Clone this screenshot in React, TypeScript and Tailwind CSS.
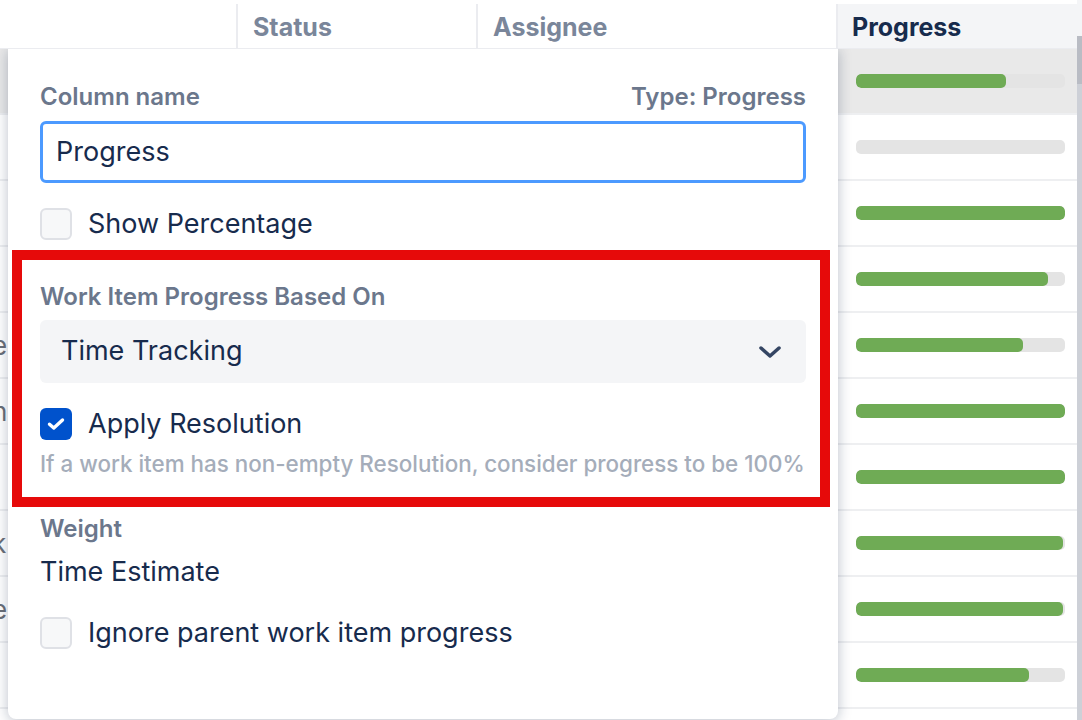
import React from 'react';

// fill widths (px) of the 209px progress track, one per row
const rows = [
  { fill: 150, tail: '', highlight: true },
  { fill: 0, tail: '' },
  { fill: 209, tail: '' },
  { fill: 192, tail: '' },
  { fill: 167, tail: 'e' },
  { fill: 209, tail: 'n' },
  { fill: 209, tail: '' },
  { fill: 207, tail: 'k' },
  { fill: 207, tail: 'es' },
  { fill: 173, tail: '' },
];

const Checkbox: React.FC<{ checked?: boolean }> = ({ checked }) =>
  checked ? (
    <span className="w-8 h-8 rounded-md bg-[#0052cc] flex items-center justify-center shrink-0">
      <svg width="18" height="14" viewBox="0 0 18 14" fill="none">
        <path d="M2.5 7.2 L6.8 11 L15.5 3" stroke="white" strokeWidth="3.4" strokeLinecap="round" strokeLinejoin="round" />
      </svg>
    </span>
  ) : (
    <span className="w-8 h-8 rounded-md border-2 border-[#dfe1e6] bg-[#f7f8f9] shrink-0" />
  );

const Label: React.FC<{ children: React.ReactNode }> = ({ children }) => (
  <div className="text-[24px] leading-7 font-semibold text-[#6b778c]">{children}</div>
);

const App: React.FC = () => {
  return (
    <div className="relative w-[1082px] h-[720px] overflow-hidden bg-white font-['Inter','Liberation_Sans',sans-serif]">
      {/* table underneath */}
      <div className="flex h-full">
        <div className="flex-1 flex flex-col">
          {/* header sits above the popup so its shadow stays below */}
          <div className="relative z-10 h-[49px] pt-1 flex bg-white border-b border-[#ebecf0] text-[25px] font-bold">
            <div className="w-[236px]" />
            <div className="w-[240px] border-l-2 border-[#ebecf0] pl-[15px] pt-[3px] flex items-center text-[#7a869a]">Status</div>
            <div className="w-[360px] border-l-2 border-[#ebecf0] pl-[15px] pt-[3px] flex items-center text-[#7a869a]">Assignee</div>
            <div className="flex-1 border-l-2 border-[#ebecf0] bg-[#f4f5f7] pl-[14px] pt-[3px] flex items-center text-[#172b4d]">Progress</div>
          </div>

          {rows.map((r, i) => (
            <div
              key={i}
              className={`h-[66px] shrink-0 flex border-b-2 border-[#eeeff1] ${r.highlight ? 'bg-[#e9e9e9]' : ''}`}
            >
              <div className="w-[836px] flex items-center overflow-hidden">
                {r.tail && (
                  <span className="ml-[-8px] text-[26px] text-[#6b6f78]">{r.tail}</span>
                )}
              </div>
              <div className="flex-1 flex items-center pl-[20px] pr-3">
                <div className="w-[209px] h-[14px] rounded-[5px] bg-[#e4e4e4] overflow-hidden">
                  <div className="h-full rounded-[5px] bg-[#6fab55]" style={{ width: r.fill }} />
                </div>
              </div>
            </div>
          ))}
        </div>
        {/* scrollbar */}
        <div className="w-[5px] flex flex-col">
          <div className="h-[36px] bg-[#f4f5f7]" />
          <div className="h-[48px] bg-[#b9bcc4]" />
          <div className="flex-1 bg-[#cdd0d7]" />
        </div>
      </div>

      {/* column settings popup */}
      <div className="absolute left-[8px] top-[48px] w-[830px] h-[671px] bg-white rounded-b-lg shadow-[0_2px_14px_rgba(9,30,66,0.28)] px-8 pt-[35px]">
        <div className="flex justify-between">
          <Label>Column name</Label>
          <Label>Type: Progress</Label>
        </div>
        <div className="mt-[10px] h-[62px] rounded-md border-[3px] border-[#4c9aff] flex items-center pl-[13px] text-[27px] text-[#172b4d]">
          Progress
        </div>
        <div className="mt-[25px] h-8 flex items-center gap-4 text-[27px] leading-8 text-[#172b4d]">
          <Checkbox />
          <span>Show Percentage</span>
        </div>

        <div className="mt-[10px] -ml-7 -mr-6 border-[10px] border-[#e60a0a] pl-[18px] pr-[14px] pt-[23px] pb-[19px]">
          <Label>Work Item Progress Based On</Label>
          <div className="mt-[9px] h-[63px] rounded-md bg-[#f4f5f7] flex items-center justify-between pl-[21px] pr-6 text-[27px] text-[#172b4d]">
            <span>Time Tracking</span>
            <svg width="24" height="14" viewBox="0 0 24 14" fill="none">
              <path d="M3 3 L12 11 L21 3" stroke="#344563" strokeWidth="3.5" strokeLinecap="round" strokeLinejoin="round" />
            </svg>
          </div>
          <div className="mt-[25px] h-8 flex items-center gap-4 text-[27px] leading-8 text-[#172b4d]">
            <Checkbox checked />
            <span>Apply Resolution</span>
          </div>
          <div className="mt-[10px] text-[22.4px] leading-7 font-medium text-[#a5adba] whitespace-nowrap">
            If a work item has non-empty Resolution, consider progress to be 100%
          </div>
        </div>

        <div className="mt-[8px]">
          <Label>Weight</Label>
        </div>
        <div className="mt-[13px] text-[27px] leading-8 text-[#172b4d]">Time Estimate</div>
        <div className="mt-[29px] h-8 flex items-center gap-4 text-[27px] leading-8 text-[#172b4d]">
          <Checkbox />
          <span>Ignore parent work item progress</span>
        </div>
      </div>
    </div>
  );
};

export default App;
